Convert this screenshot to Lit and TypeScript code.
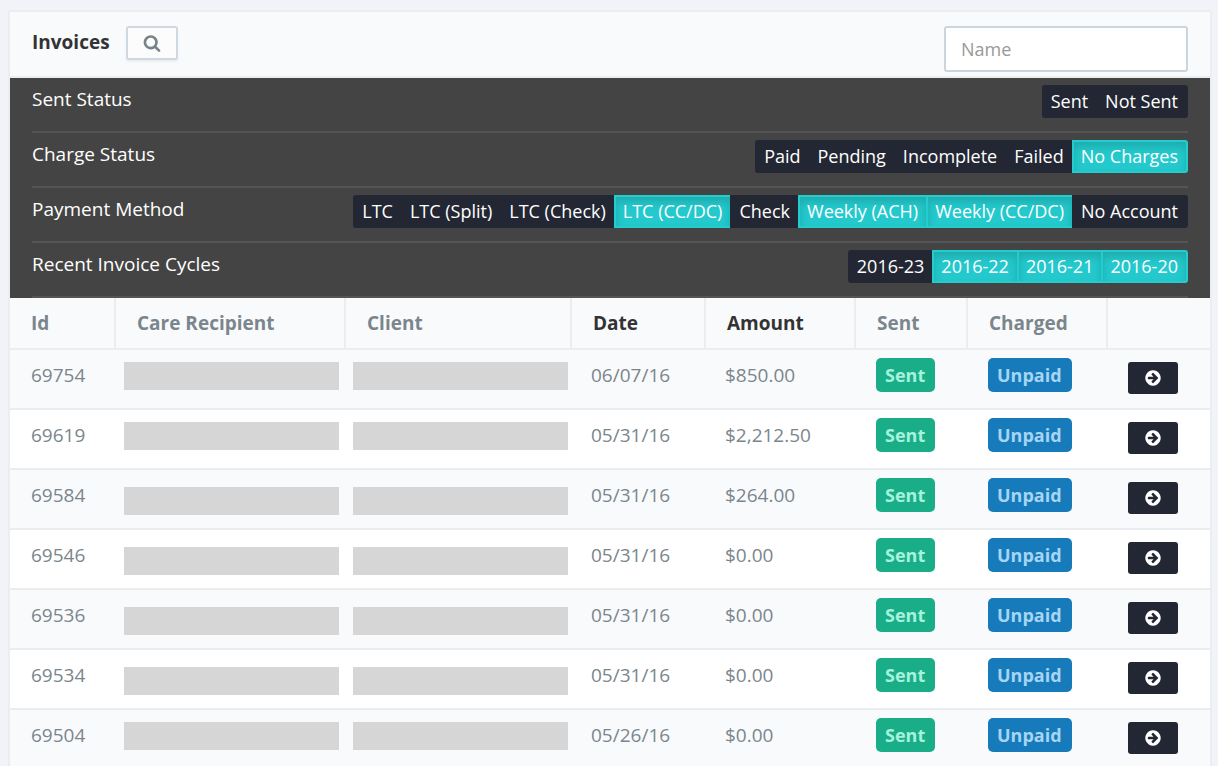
import { LitElement, html, css } from "lit";
import { customElement, state } from "lit/decorators.js";
import { classMap } from "lit/directives/class-map.js";

interface Filter {
  label: string;
  options: string[];
  active: string[];
}

interface Invoice {
  id: string;
  date: string;
  amount: string;
  low?: boolean;
}

const FILTERS: Filter[] = [
  { label: "Sent Status", options: ["Sent", "Not Sent"], active: [] },
  {
    label: "Charge Status",
    options: ["Paid", "Pending", "Incomplete", "Failed", "No Charges"],
    active: ["No Charges"],
  },
  {
    label: "Payment Method",
    options: [
      "LTC",
      "LTC (Split)",
      "LTC (Check)",
      "LTC (CC/DC)",
      "Check",
      "Weekly (ACH)",
      "Weekly (CC/DC)",
      "No Account",
    ],
    active: ["LTC (CC/DC)", "Weekly (ACH)", "Weekly (CC/DC)"],
  },
  {
    label: "Recent Invoice Cycles",
    options: ["2016-23", "2016-22", "2016-21", "2016-20"],
    active: ["2016-22", "2016-21", "2016-20"],
  },
];

const INVOICES: Invoice[] = [
  { id: "69754", date: "06/07/16", amount: "$850.00" },
  { id: "69619", date: "05/31/16", amount: "$2,212.50" },
  { id: "69584", date: "05/31/16", amount: "$264.00", low: true },
  { id: "69546", date: "05/31/16", amount: "$0.00", low: true },
  { id: "69536", date: "05/31/16", amount: "$0.00", low: true },
  { id: "69534", date: "05/31/16", amount: "$0.00", low: true },
  { id: "69504", date: "05/26/16", amount: "$0.00" },
];

@customElement("app-root")
export class AppRoot extends LitElement {
  @state() private filters = FILTERS;

  static styles = css`
    :host {
      display: block;
      min-height: 100vh;
      box-sizing: border-box;
      padding: 10px 6px 0 8px;
      background: #f2f3f8;
      color: #7b868c;
      font-family: "Open Sans", "Noto Sans", sans-serif;
      font-size: 19px;
      line-height: 28px;
    }
    * {
      box-sizing: border-box;
    }
    .panel {
      border: 2px solid #ebeef1;
      border-bottom: 0;
      border-radius: 3px 3px 0 0;
      background: #fff;
    }
    .head {
      display: flex;
      align-items: flex-start;
      gap: 16px;
      padding: 14px 22px 4px;
      background: #f9fafc;
      border-bottom: 2px solid #ebeef1;
    }
    .title {
      margin: 2px 0 0;
      color: #333;
      font-size: 19px;
      font-weight: 700;
      line-height: 28px;
    }
    button {
      font: inherit;
      cursor: pointer;
    }
    .search {
      display: flex;
      align-items: center;
      justify-content: center;
      width: 52px;
      height: 34px;
      padding: 0;
      border: 2px solid #cfd8e0;
      border-radius: 3px;
      background: #fcfcfd;
      box-shadow: 0 2px 2px rgba(0, 0, 0, 0.05);
      color: #77838a;
    }
    .name {
      width: 244px;
      height: 46px;
      margin-left: auto;
      padding: 0 15px;
      border: 2px solid #cbd5dd;
      border-radius: 3px;
      background: #fff;
      color: #555;
      font: inherit;
      font-size: 18px;
    }
    .name::placeholder {
      color: #999;
      opacity: 1;
    }
    .filters {
      padding: 0 22px;
      background: #444;
      color: #fff;
    }
    .filter {
      display: flex;
      align-items: flex-start;
      justify-content: space-between;
      height: 55px;
      padding-top: 7px;
      border-bottom: 2px solid #555;
    }
    .group {
      display: flex;
    }
    .option {
      height: 33px;
      margin-left: -2px;
      padding: 0 8px 0 7px;
      border: 2px solid #232733;
      background: #232733;
      color: #fff;
      font-size: 18px;
      line-height: 29px;
      white-space: nowrap;
    }
    .option:first-child {
      margin-left: 0;
      border-radius: 3px 0 0 3px;
    }
    .option:last-child {
      border-radius: 0 3px 3px 0;
    }
    .option.on {
      border-color: #23cccf;
      background: #23c9cc;
      box-shadow: inset 0 5px 9px rgba(0, 0, 0, 0.15);
    }
    .invoices {
      width: 100%;
      border-collapse: separate;
      border-spacing: 0;
      table-layout: fixed;
    }
    .c-id { width: 106px; }
    .c-person { width: 230px; }
    .c-client { width: 226px; }
    .c-date { width: 134px; }
    .c-amount { width: 150px; }
    .c-sent { width: 112px; }
    .c-charged { width: 140px; }
    th {
      height: 52px;
      padding: 0 20px 0 21px;
      border-right: 2px solid #ebeef1;
      border-bottom: 2px solid #ebeef1;
      background: #f9fafc;
      text-align: left;
      font-weight: 700;
      white-space: nowrap;
    }
    th:last-child {
      border-right: 0;
    }
    th.sorted {
      color: #333;
    }
    td {
      height: 60px;
      padding: 8px 0 0 20px;
      border-bottom: 2px solid #e9edf0;
      vertical-align: top;
      white-space: nowrap;
    }
    td.text {
      padding: 11px 0 0 19px;
    }
    td.text:first-child {
      padding-left: 21px;
    }
    tbody tr:nth-child(odd) {
      background: #f9fafc;
    }
    td.person {
      padding: 12px 2px 0 8px;
    }
    td.client {
      padding: 12px 4px 0 7px;
    }
    tr.low td.person,
    tr.low td.client {
      padding-top: 17px;
    }
    .bar {
      max-width: 215px;
      height: 28px;
      background: #d6d6d6;
    }
    .badge {
      display: inline-block;
      height: 34px;
      padding: 0 10px 0 9px;
      border-radius: 5px;
      font-size: 18px;
      font-weight: 700;
      line-height: 34px;
    }
    .badge.sent {
      background: #1aae88;
      color: #a5f2dd;
    }
    .badge.unpaid {
      background: #177bbb;
      color: #a6d5f3;
    }
    td.open {
      padding-top: 12px;
    }
    .go {
      display: flex;
      align-items: center;
      justify-content: center;
      width: 50px;
      height: 32px;
      padding: 0;
      border: 0;
      border-radius: 3px;
      background: #232733;
      color: #fff;
    }
  `;

  private toggle(filter: Filter, option: string) {
    this.filters = this.filters.map((f) =>
      f !== filter
        ? f
        : {
            ...f,
            active: f.active.includes(option)
              ? f.active.filter((o) => o !== option)
              : [...f.active, option],
          }
    );
  }

  private renderFilter(filter: Filter) {
    return html`
      <div class="filter">
        <span>${filter.label}</span>
        <div class="group" role="group" aria-label=${filter.label}>
          ${filter.options.map((option) => {
            const on = filter.active.includes(option);
            return html`<button
              type="button"
              class=${classMap({ option: true, on })}
              aria-pressed=${on}
              @click=${() => this.toggle(filter, option)}
            >${option}</button>`;
          })}
        </div>
      </div>
    `;
  }

  private renderInvoice(invoice: Invoice) {
    return html`
      <tr class=${classMap({ low: !!invoice.low })}>
        <td class="text">${invoice.id}</td>
        <td class="person"><div class="bar"></div></td>
        <td class="client"><div class="bar"></div></td>
        <td class="text">${invoice.date}</td>
        <td class="text">${invoice.amount}</td>
        <td><span class="badge sent">Sent</span></td>
        <td><span class="badge unpaid">Unpaid</span></td>
        <td class="open">
          <button type="button" class="go" aria-label="Open invoice">
            <svg width="18" height="18" viewBox="0 0 1792 1792" aria-hidden="true">
              <path
                fill="currentColor"
                d="M1413 896q0-27-18-45l-91-91-362-362q-18-18-45-18t-45 18l-91 91q-18 18-18 45t18 45l189 189h-502q-26 0-45 19t-19 45v128q0 26 19 45t45 19h502l-189 189q-19 19-19 45t19 45l91 91q18 18 45 18t45-18l362-362 91-91q18-18 18-45zm251 0q0 209-103 385.5t-279.5 279.5-385.5 103-385.5-103-279.5-279.5-103-385.5 103-385.5 279.5-279.5 385.5-103 385.5 103 279.5 279.5 103 385.5z"
              />
            </svg>
          </button>
        </td>
      </tr>
    `;
  }

  render() {
    return html`
      <section class="panel">
        <header class="head">
          <h1 class="title">Invoices</h1>
          <button type="button" class="search" aria-label="Search">
            <svg width="18" height="18" viewBox="0 0 1792 1792" aria-hidden="true">
              <path
                fill="currentColor"
                d="M1216 832q0-185-131.5-316.5t-316.5-131.5-316.5 131.5-131.5 316.5 131.5 316.5 316.5 131.5 316.5-131.5 131.5-316.5zm512 832q0 52-38 90t-90 38q-54 0-90-38l-343-342q-179 124-399 124-143 0-273.5-55.5t-225-150-150-225-55.5-273.5 55.5-273.5 150-225 225-150 273.5-55.5 273.5 55.5 225 150 150 225 55.5 273.5q0 220-124 399l343 343q37 37 37 90z"
              />
            </svg>
          </button>
          <input class="name" type="text" placeholder="Name" aria-label="Name" />
        </header>
        <div class="filters">${this.filters.map((f) => this.renderFilter(f))}</div>
        <table class="invoices">
          <colgroup>
            <col class="c-id" />
            <col class="c-person" />
            <col class="c-client" />
            <col class="c-date" />
            <col class="c-amount" />
            <col class="c-sent" />
            <col class="c-charged" />
            <col />
          </colgroup>
          <thead>
            <tr>
              <th scope="col">Id</th>
              <th scope="col">Care Recipient</th>
              <th scope="col">Client</th>
              <th scope="col" class="sorted">Date</th>
              <th scope="col" class="sorted">Amount</th>
              <th scope="col">Sent</th>
              <th scope="col">Charged</th>
              <th></th>
            </tr>
          </thead>
          <tbody>${INVOICES.map((i) => this.renderInvoice(i))}</tbody>
        </table>
      </section>
    `;
  }
}
